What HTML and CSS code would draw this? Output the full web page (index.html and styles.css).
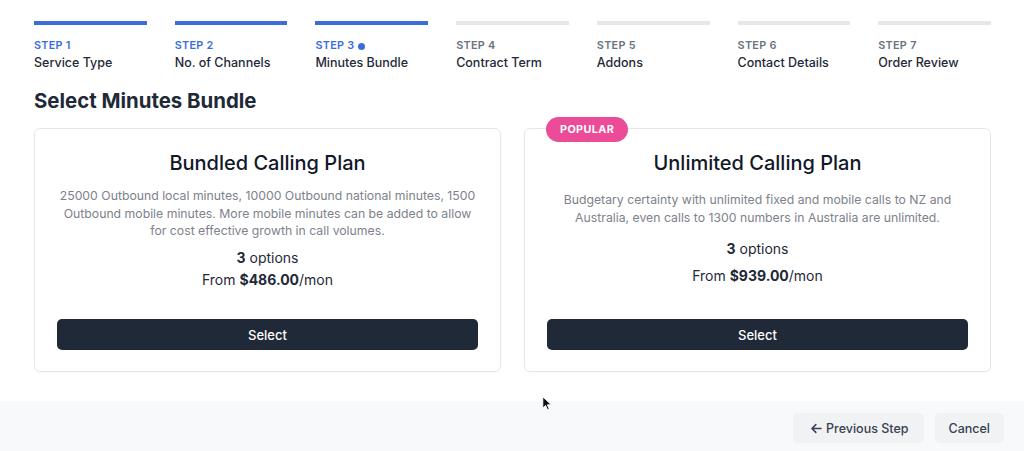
FILE: index.html
```html
<!DOCTYPE html>
<html lang="en">
<head>
<meta charset="utf-8">
<title>Select Minutes Bundle</title>
<link rel="stylesheet" href="styles.css">
</head>
<body>
<div class="page">
  <main class="content">
    <nav class="steps">
      <div class="step done"><div class="bar"></div><span class="num">Step 1</span><span class="name">Service Type</span></div>
      <div class="step done"><div class="bar"></div><span class="num">Step 2</span><span class="name">No. of Channels</span></div>
      <div class="step done current"><div class="bar"></div><span class="num">Step 3 <i class="dot"></i></span><span class="name">Minutes Bundle</span></div>
      <div class="step"><div class="bar"></div><span class="num">Step 4</span><span class="name">Contract Term</span></div>
      <div class="step"><div class="bar"></div><span class="num">Step 5</span><span class="name">Addons</span></div>
      <div class="step"><div class="bar"></div><span class="num">Step 6</span><span class="name">Contact Details</span></div>
      <div class="step"><div class="bar"></div><span class="num">Step 7</span><span class="name">Order Review</span></div>
    </nav>

    <h2 class="heading">Select Minutes Bundle</h2>

    <div class="plans">
      <section class="card">
        <h3 class="title">Bundled Calling Plan</h3>
        <p class="desc">25000 Outbound local minutes, 10000 Outbound national minutes, 1500 Outbound mobile minutes. More mobile minutes can be added to allow for cost effective growth in call volumes.</p>
        <p class="options"><b>3</b> options</p>
        <p class="price">From <b>$486.00</b>/mon</p>
        <button class="select">Select</button>
      </section>
      <section class="card">
        <span class="badge">Popular</span>
        <h3 class="title">Unlimited Calling Plan</h3>
        <p class="desc">Budgetary certainty with unlimited fixed and mobile calls to NZ and Australia, even calls to 1300 numbers in Australia are unlimited.</p>
        <p class="options"><b>3</b> options</p>
        <p class="price">From <b>$939.00</b>/mon</p>
        <button class="select">Select</button>
      </section>
    </div>
  </main>

  <footer class="footer">
    <button class="ghost prev"><svg class="arrow" viewBox="0 0 20 20" width="13" height="13" aria-hidden="true"><path d="M9 4 3 10l6 6M3.8 10H17" fill="none" stroke="currentColor" stroke-width="2.4" stroke-linecap="round" stroke-linejoin="round"/></svg>Previous Step</button>
    <button class="ghost">Cancel</button>
  </footer>

  <svg class="cursor" viewBox="0 0 12 18" width="10" height="15" aria-hidden="true"><path d="M1 1v13.5l3.3-3.2 2.3 5.2 2-0.9-2.2-5.1H11z" fill="#111" stroke="#fff" stroke-width="1"/></svg>
</div>
</body>
</html>
```

FILE: styles.css
```css
* { box-sizing: border-box; }

html, body {
  margin: 0;
  padding: 0;
  background: #ffffff;
  font-family: Inter, "Liberation Sans", Arial, sans-serif;
  color: #1f2937;
}

.page {
  position: relative;
  min-height: 451px;
}

.content {
  padding: 21px 33px 0 34px;
}

/* Steps */
.steps {
  display: grid;
  grid-template-columns: repeat(7, 1fr);
  column-gap: 28px;
}

.step {
  display: flex;
  flex-direction: column;
}

.bar {
  height: 4px;
  background: #e5e7eb;
}

.step.done .bar { background: #3b6ed8; }

.num {
  margin-top: 13px;
  display: flex;
  align-items: center;
  gap: 4px;
  font-size: 10.8px;
  line-height: 16px;
  font-weight: 600;
  letter-spacing: 0.3px;
  text-transform: uppercase;
  color: #6b7280;
}

.step.done .num { color: #3b6ed8; }

.dot {
  width: 7px;
  height: 7px;
  border-radius: 50%;
  background: #3b6ed8;
}

.name {
  font-size: 12.5px;
  line-height: 17px;
  font-weight: 500;
  color: #1f2937;
}

.heading {
  margin: 16px 0 0;
  font-size: 20.4px;
  line-height: 28px;
  font-weight: 700;
  color: #1f2937;
}

/* Plans */
.plans {
  margin-top: 13px;
  display: grid;
  grid-template-columns: 1fr 1fr;
  column-gap: 23px;
}

.card {
  position: relative;
  display: flex;
  flex-direction: column;
  justify-content: space-between;
  border: 1px solid #e6e7ea;
  border-radius: 6px;
  padding: 20px 22px 21px;
  box-shadow: 0 1px 2px rgba(0, 0, 0, 0.03);
  text-align: center;
}

.badge {
  position: absolute;
  top: -12px;
  left: 21px;
  height: 25px;
  padding: 0 14px;
  display: flex;
  align-items: center;
  border-radius: 13px;
  background: #ec4b98;
  color: #ffffff;
  font-size: 10.8px;
  font-weight: 700;
  letter-spacing: 0.4px;
  text-transform: uppercase;
}

.title {
  margin: 0;
  font-size: 20px;
  line-height: 28px;
  font-weight: 500;
  color: #111827;
}

.desc {
  margin: 10px 0 0;
  font-size: 12.25px;
  line-height: 17.5px;
  color: #7d828b;
}

.options {
  margin: 8.5px 0 0;
  font-size: 14px;
  line-height: 20px;
  color: #1f2937;
}

.price {
  margin: 2px 0 0;
  font-size: 14px;
  line-height: 20px;
  color: #1f2937;
}

.options b, .price b { font-weight: 700; }

.select {
  margin-top: 29px;
  height: 31px;
  border: 0;
  border-radius: 5px;
  background: #1f2937;
  color: #ffffff;
  font-family: inherit;
  font-size: 13px;
  font-weight: 500;
}

/* Footer */
.footer {
  margin-top: 29px;
  background: #f8f9fa;
  padding: 12px 20px 12px;
  display: flex;
  justify-content: flex-end;
  gap: 11px;
}

.ghost {
  height: 30px;
  display: flex;
  align-items: center;
  gap: 3px;
  padding: 0 14px;
  border: 0;
  border-radius: 5px;
  background: #f1f2f4;
  color: #374151;
  font-family: inherit;
  font-size: 12.5px;
  font-weight: 500;
}

.ghost.prev { padding: 0 15px 0 17px; }

.arrow { display: block; }

.cursor {
  position: absolute;
  left: 542px;
  top: 396px;
}
```
